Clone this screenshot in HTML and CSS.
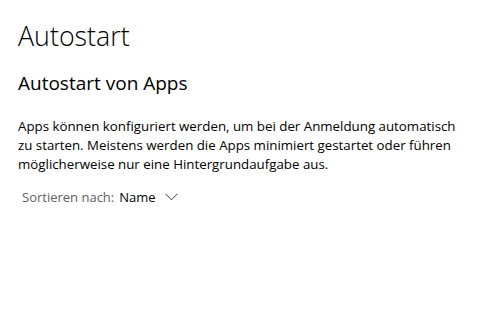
FILE: index.html
```html
<!DOCTYPE html>
<html lang="de">
<head>
<meta charset="utf-8">
<title>Autostart</title>
<link rel="stylesheet" href="styles.css">
</head>
<body>
<main class="page">
  <h1 class="title">Autostart</h1>
  <h2 class="subtitle">Autostart von Apps</h2>
  <p class="desc">Apps können konfiguriert werden, um bei der Anmeldung automatisch zu starten. Meistens werden die Apps minimiert gestartet oder führen möglicherweise nur eine Hintergrundaufgabe aus.</p>
  <div class="sort">
    <span class="sort-label">Sortieren nach:</span>
    <span class="sort-value">Name</span>
    <svg class="chev" width="13" height="8" viewBox="0 0 13 8"><path d="M0.5 0.8 L6.5 6.8 L12.5 0.8" fill="none" stroke="#333" stroke-width="1"/></svg>
  </div>
</main>
</body>
</html>
```
FILE: styles.css
```css
html, body {
  margin: 0;
  padding: 0;
  background: #ffffff;
}
body {
  font-family: "Open Sans", "Noto Sans", sans-serif;
  color: #000;
}
.page {
  padding: 20px 18px 0 18px;
  display: flex;
  flex-direction: column;
}
.title {
  margin: 0;
  font-size: 26.8px;
  font-weight: 300;
  line-height: 32px;
}
.subtitle {
  margin: 18px 0 0 0;
  font-size: 19px;
  font-weight: 400;
  line-height: 26px;
}
.desc {
  margin: 21px 0 0 0;
  font-size: 13.3px;
  line-height: 19px;
  width: 442px;
}
.sort {
  margin-top: 13px;
  padding-left: 4px;
  display: flex;
  align-items: center;
  gap: 5px;
  font-size: 13px;
  line-height: 20px;
}
.sort-label {
  color: #5f5f5f;
}
.sort-value {
  color: #000;
}
.chev {
  margin-left: 4px;
}
```
